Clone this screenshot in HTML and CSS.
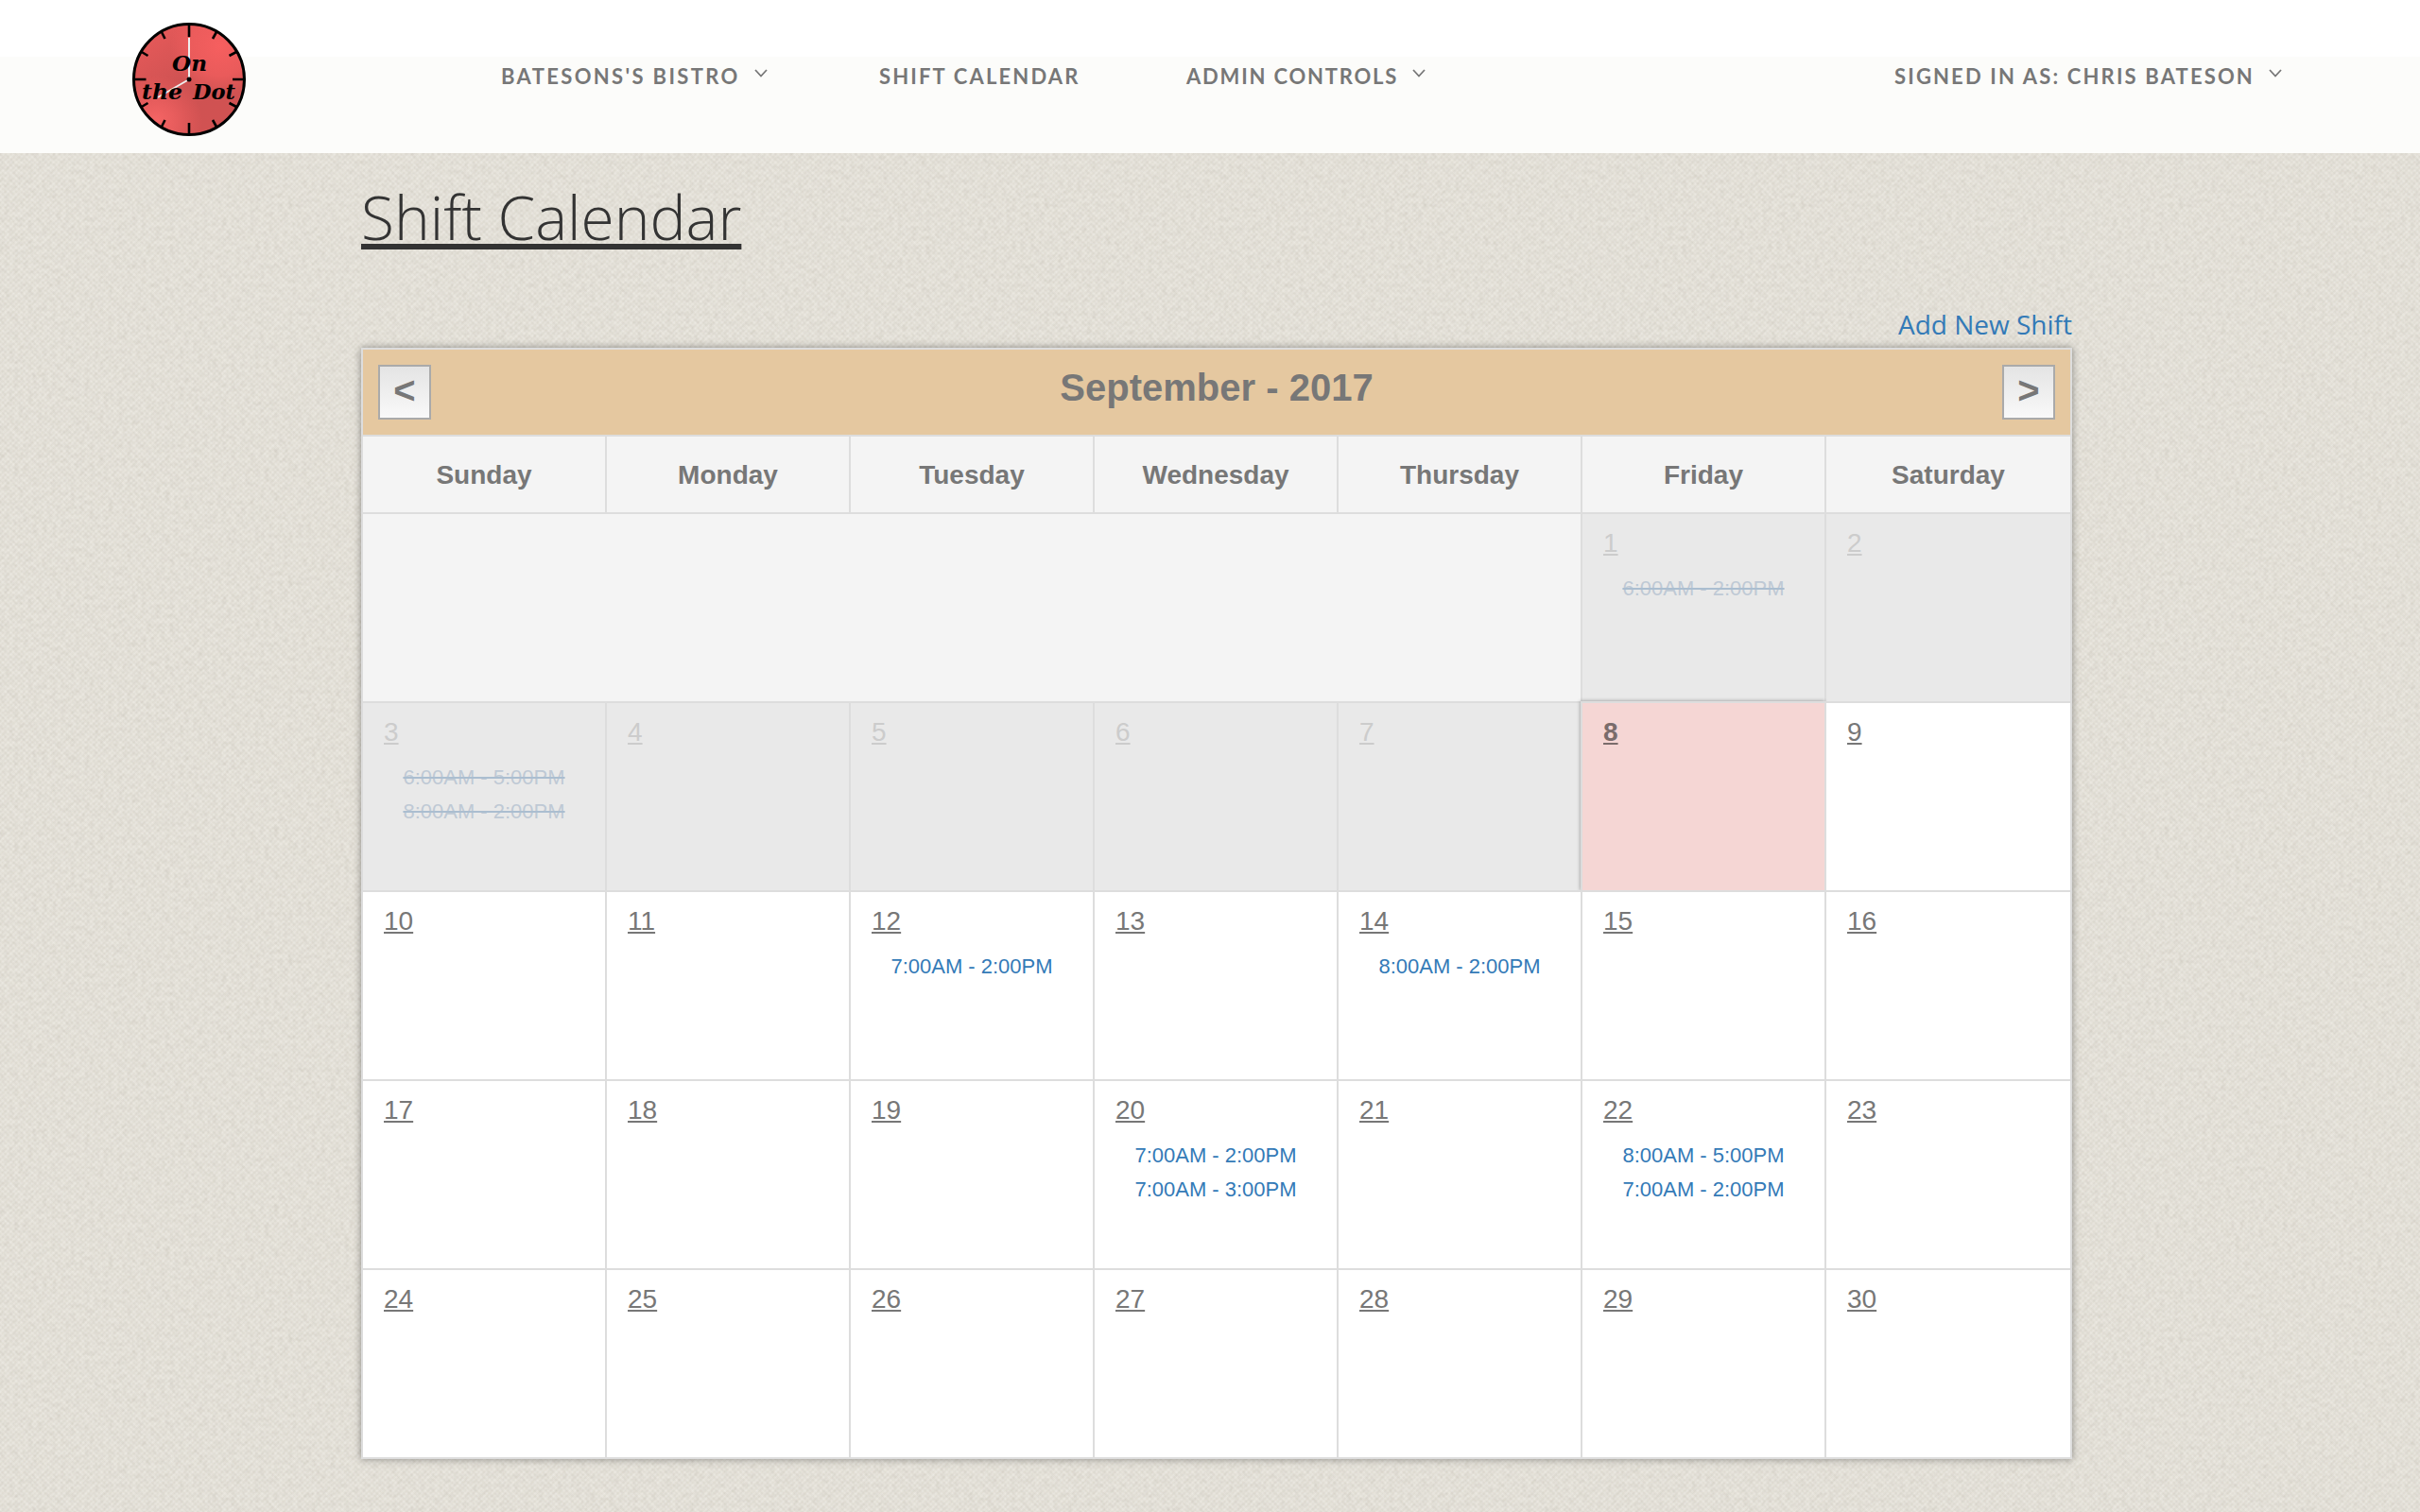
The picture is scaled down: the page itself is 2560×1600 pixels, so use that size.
FILE: index.html
```html
<!DOCTYPE html>
<html lang="en">
<head>
<meta charset="utf-8">
<title>Shift Calendar</title>
<link rel="stylesheet" href="styles.css">
</head>
<body>
<header class="site-header">
  <svg class="logo" viewBox="0 0 120 120" role="img" aria-label="On the Dot">
    <defs>
      <linearGradient id="face" x1=".85" y1="1" x2=".15" y2="0">
        <stop offset="0" stop-color="#d25252"/><stop offset=".5" stop-color="#ce5252"/><stop offset="1" stop-color="#e85a5a"/>
      </linearGradient>
      <radialGradient id="shine" cx=".78" cy=".2" r=".45">
        <stop offset="0" stop-color="#f65f5f"/><stop offset=".6" stop-color="#f05d5d" stop-opacity=".8"/><stop offset="1" stop-color="#ee5c5c" stop-opacity="0"/>
      </radialGradient>
      <radialGradient id="glow" cx=".2" cy=".88" r=".42">
        <stop offset="0" stop-color="#f66565"/><stop offset=".4" stop-color="#ee6060" stop-opacity=".8"/><stop offset="1" stop-color="#ee5c5c" stop-opacity="0"/>
      </radialGradient>
    </defs>
    <circle cx="60" cy="60" r="58.5" fill="url(#face)"/>
    <circle cx="60" cy="60" r="58.5" fill="url(#shine)"/>
    <circle cx="60" cy="60" r="58.5" fill="url(#glow)" stroke="#000" stroke-width="3"/>
    <path d="M60 1v14M60 106v13M1 60h13.500M106 60h13M30.500 9l4 8M89.500 9l-4.500 8M9 30.500l7.500 4.500M111 30.500l-8.500 4.500M9 89.500l7.500-4.500M111 89.500l-8.500-4.500M30.500 111l4-8M89.500 111l-4.500-8" stroke="#000" stroke-width="2.600" fill="none"/>
    <path d="M60 60V16M60 60L27 79" stroke="#eee" stroke-width="2" fill="none"/>
    <circle cx="60" cy="60" r="2.500"/>
    <text class="logo-text" x="42" y="51" textLength="37" lengthAdjust="spacingAndGlyphs">On</text>
    <text class="logo-text" x="10" y="81" textLength="43" lengthAdjust="spacingAndGlyphs">the</text>
    <text class="logo-text" x="64" y="81" textLength="45" lengthAdjust="spacingAndGlyphs">Dot</text>
  </svg>
  <nav class="main-nav">
    <a class="nav-link bistro"><span>BATESONS'S BISTRO</span><svg class="chevron" viewBox="0 0 14 9"><path d="M1 1l6 6.500L13 1"/></svg></a>
    <a class="nav-link shifts"><span>SHIFT CALENDAR</span></a>
    <a class="nav-link admin"><span>ADMIN CONTROLS</span><svg class="chevron" viewBox="0 0 14 9"><path d="M1 1l6 6.500L13 1"/></svg></a>
    <a class="nav-link account"><span>SIGNED IN AS: CHRIS BATESON</span><svg class="chevron" viewBox="0 0 14 9"><path d="M1 1l6 6.500L13 1"/></svg></a>
  </nav>
</header>
<main class="page">
  <h1 class="page-title"><span>Shift Calendar</span></h1>
  <div class="actions"><a class="add-link">Add New Shift</a></div>
  <section class="calendar">
    <div class="month-bar">
      <a class="month-button">&lt;</a>
      <h2 class="month-name">September - 2017</h2>
      <a class="month-button">&gt;</a>
    </div>
    <div class="weekday">Sunday</div><div class="weekday">Monday</div><div class="weekday">Tuesday</div><div class="weekday">Wednesday</div><div class="weekday">Thursday</div><div class="weekday">Friday</div><div class="weekday">Saturday</div>
    <div class="day blank"></div>
    <div class="day past"><a class="date">1</a><a class="shift">6:00AM - 2:00PM</a></div>
    <div class="day past"><a class="date">2</a></div>
    <div class="day past"><a class="date">3</a><a class="shift">6:00AM - 5:00PM</a><a class="shift">8:00AM - 2:00PM</a></div>
    <div class="day past"><a class="date">4</a></div>
    <div class="day past"><a class="date">5</a></div>
    <div class="day past"><a class="date">6</a></div>
    <div class="day past"><a class="date">7</a></div>
    <div class="day today"><a class="date">8</a></div>
    <div class="day"><a class="date">9</a></div>
    <div class="day"><a class="date">10</a></div>
    <div class="day"><a class="date">11</a></div>
    <div class="day"><a class="date">12</a><a class="shift">7:00AM - 2:00PM</a></div>
    <div class="day"><a class="date">13</a></div>
    <div class="day"><a class="date">14</a><a class="shift">8:00AM - 2:00PM</a></div>
    <div class="day"><a class="date">15</a></div>
    <div class="day"><a class="date">16</a></div>
    <div class="day"><a class="date">17</a></div>
    <div class="day"><a class="date">18</a></div>
    <div class="day"><a class="date">19</a></div>
    <div class="day"><a class="date">20</a><a class="shift">7:00AM - 2:00PM</a><a class="shift">7:00AM - 3:00PM</a></div>
    <div class="day"><a class="date">21</a></div>
    <div class="day"><a class="date">22</a><a class="shift">8:00AM - 5:00PM</a><a class="shift">7:00AM - 2:00PM</a></div>
    <div class="day"><a class="date">23</a></div>
    <div class="day"><a class="date">24</a></div>
    <div class="day"><a class="date">25</a></div>
    <div class="day"><a class="date">26</a></div>
    <div class="day"><a class="date">27</a></div>
    <div class="day"><a class="date">28</a></div>
    <div class="day"><a class="date">29</a></div>
    <div class="day"><a class="date">30</a></div>
  </section>
</main>
</body>
</html>
```
FILE: styles.css
```css
* { box-sizing: border-box; }

body {
  margin: 0;
  min-height: 1600px;
  overflow: hidden;
  font-family: "Open Sans", sans-serif;
  background-color: #e9e6de;
  /* woven paper texture */
  background-image: url("data:image/svg+xml,%3Csvg xmlns='http://www.w3.org/2000/svg' width='400' height='400'%3E%3Cfilter id='a' x='0' y='0' width='100%25' height='100%25' color-interpolation-filters='sRGB'%3E%3CfeTurbulence type='fractalNoise' baseFrequency='.2' numOctaves='2' seed='4' stitchTiles='stitch'/%3E%3CfeColorMatrix values='0 0 0 0 .46 0 0 0 0 .42 0 0 0 0 .36 .16 .12 0 0 -.11'/%3E%3C/filter%3E%3Crect width='400' height='400' filter='url(%23a)'/%3E%3C/svg%3E"),
    repeating-linear-gradient(45deg, rgba(115, 108, 85, .05) 0, transparent 2px, rgba(115, 108, 85, .05) 4px),
    repeating-linear-gradient(-45deg, rgba(255, 255, 255, .13) 0, rgba(115, 108, 85, .03) 2px, rgba(255, 255, 255, .13) 4px);
}

.site-header {
  display: flex;
  height: 162px;
  padding: 24px 0 0 140px;
  background: linear-gradient(#fff 60px, #fcfcfa 60px);
}

.logo {
  width: 120px;
  height: 120px;
  flex: none;
}

.logo-text {
  font: italic bold 23px "DejaVu Serif", serif;
}

.main-nav {
  display: flex;
  height: 112px;
  margin-left: 270px;
  padding-top: 42px;
}

.nav-link {
  display: flex;
  flex: none;
  gap: 15px;
  height: 30px;
  color: #777;
  font: bold 22px/30px Lato, sans-serif;
  letter-spacing: 2.15px;
  white-space: nowrap;
}

.bistro { width: 400px; letter-spacing: 2.35px; }
.shifts { width: 325px; }
.admin { width: 749px; letter-spacing: 1.8px; }

.chevron {
  width: 14px;
  height: 9px;
  margin-top: 7px;
  fill: none;
  stroke: #777;
  stroke-width: 1.8;
}

.page {
  width: 1810px;
  margin-left: 382px;
}

.page-title {
  height: 157px;
  margin: 0;
  padding-top: 19px;
  color: #333;
  font-size: 64px;
  font-weight: 300;
  line-height: 98px;
  text-decoration: underline;
  text-decoration-thickness: 6px;
  text-underline-offset: 4px;
  text-decoration-skip-ink: none;
}

.actions {
  height: 49px;
  text-align: right;
  font-size: 28px;
  line-height: 48px;
}

.add-link { color: #337ab7; }

.calendar {
  display: grid;
  grid-template-columns: repeat(6, 258px) 260px;
  grid-template-rows: 92px 82px repeat(5, 200px);
  border: solid #ddd;
  border-width: 0 2px 2px 0;
  background: #f3f3f3;
  box-shadow: 0 0 8px rgba(0, 0, 0, .4);
  color: #777;
  font-family: "Liberation Sans", Arial, sans-serif;
}

.month-bar {
  grid-column: 1 / -1;
  display: flex;
  justify-content: space-between;
  padding: 16px 16px 0;
  border: solid #ddd;
  border-width: 2px 0 0 2px;
  background: #e5c8a0;
}

.month-button {
  width: 56px;
  height: 58px;
  border: 2px solid #aaa;
  background: linear-gradient(#e4e4e4, #f9f9f9);
  font-size: 40px;
  font-weight: bold;
  line-height: 50px;
  text-align: center;
}

.month-name {
  margin: -16px 0 0;
  font-size: 40px;
  line-height: 80px;
}

.weekday,
.day {
  border: solid #ddd;
  border-width: 2px 0 0 2px;
}

.weekday {
  background: #f4f4f4;
  font-size: 28px;
  font-weight: bold;
  line-height: 82px;
  text-align: center;
}

.day {
  padding-top: 15px;
  background: #fff;
}

.blank {
  grid-column: span 5;
  background: #f4f4f4;
}

.date {
  display: block;
  padding-left: 22px;
  margin-bottom: 14px;
  font-size: 28px;
  line-height: 32px;
  text-decoration: underline;
  text-decoration-thickness: 2px;
  text-underline-offset: 2px;
  text-decoration-skip-ink: none;
}

.shift {
  display: block;
  color: #337ab7;
  font-size: 22px;
  line-height: 36px;
  text-align: center;
}

.past {
  background: #e9e9e9;
  color: #ccc;
}

.past .shift {
  color: #bfc9d5;
  text-decoration: line-through;
  text-decoration-color: #abbed0;
  text-decoration-thickness: 2px;
}

.today {
  background: #f5d6d4;
  box-shadow: 0 0 4px rgba(0, 0, 0, .4);
  color: #7a6c6b;
  font-weight: bold;
}
```
